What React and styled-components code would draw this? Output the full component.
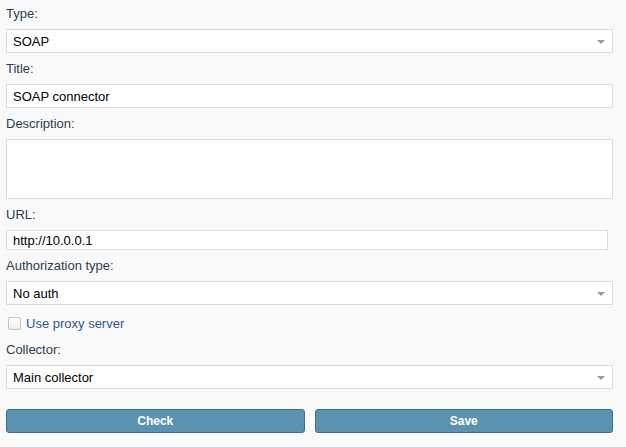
import React from 'react';
import styled, { createGlobalStyle } from 'styled-components';

const GlobalStyle = createGlobalStyle`
  body {
    margin: 0;
    background: #f9f9f9;
    font-family: "Liberation Sans", Arial, sans-serif;
  }
`;

const Form = styled.form`
  width: 607px;
  padding: 6px 0 0 6px;
`;

const Field = styled.div`
  margin-top: 8px;
  &:first-child {
    margin-top: 0;
  }
`;

const Label = styled.label`
  display: block;
  font-size: 13px;
  line-height: 15px;
  color: #2d3d4f;
  margin-bottom: 8px;
`;

const control = `
  display: block;
  box-sizing: border-box;
  width: 100%;
  margin: 0;
  border: 1px solid #dcdcdc;
  background: #fff;
  font-family: "Liberation Sans", Arial, sans-serif;
  font-size: 13px;
  color: #000;
  padding: 0 6px;
  outline: none;
  border-radius: 0;
`;

const SelectWrap = styled.div`
  position: relative;
  &::after {
    content: '';
    position: absolute;
    right: 8px;
    top: 11px;
    border-left: 4px solid transparent;
    border-right: 4px solid transparent;
    border-top: 4px solid #999;
    pointer-events: none;
  }
`;

const Select = styled.select`
  ${control}
  height: 24px;
  appearance: none;
`;

const Input = styled.input`
  ${control}
  height: ${p => (p.$small ? '20px' : '24px')};
  width: ${p => (p.$small ? '602px' : '100%')};
`;

const TextArea = styled.textarea`
  ${control}
  height: 60px;
  resize: none;
`;

const CheckRow = styled.label`
  display: flex;
  align-items: center;
  gap: 5px;
  height: 21px;
  margin-top: 8px;
  padding-left: 2px;
  font-size: 13px;
  color: #2f5a86;
`;

const Box = styled.span`
  box-sizing: border-box;
  width: 13px;
  height: 13px;
  border: 1px solid #c4c4c4;
  border-radius: 2px;
  background: linear-gradient(#fdfdfd, #ececec);
`;

const Buttons = styled.div`
  display: grid;
  grid-template-columns: 1fr 1fr;
  gap: 10px;
  margin-top: 20px;
`;

const Button = styled.button`
  height: 24px;
  border: 1px solid #3e7190;
  border-radius: 3px;
  background: #5a92b0;
  color: #fff;
  font-family: "Liberation Sans", Arial, sans-serif;
  font-weight: bold;
  font-size: 12px;
  padding: 0;
`;

function SelectField({ label, value }) {
  return (
    <Field>
      <Label>{label}</Label>
      <SelectWrap>
        <Select defaultValue={value}>
          <option>{value}</option>
        </Select>
      </SelectWrap>
    </Field>
  );
}

export default function App() {
  return (
    <>
      <GlobalStyle />
      <Form onSubmit={e => e.preventDefault()}>
        <SelectField label="Type:" value="SOAP" />
        <Field>
          <Label>Title:</Label>
          <Input defaultValue="SOAP connector" />
        </Field>
        <Field>
          <Label>Description:</Label>
          <TextArea />
        </Field>
        <Field>
          <Label>URL:</Label>
          <Input $small defaultValue="http://10.0.0.1" />
        </Field>
        <SelectField label="Authorization type:" value="No auth" />
        <CheckRow>
          <Box />
          Use proxy server
        </CheckRow>
        <SelectField label="Collector:" value="Main collector" />
        <Buttons>
          <Button type="button">Check</Button>
          <Button type="button">Save</Button>
        </Buttons>
      </Form>
    </>
  );
}
